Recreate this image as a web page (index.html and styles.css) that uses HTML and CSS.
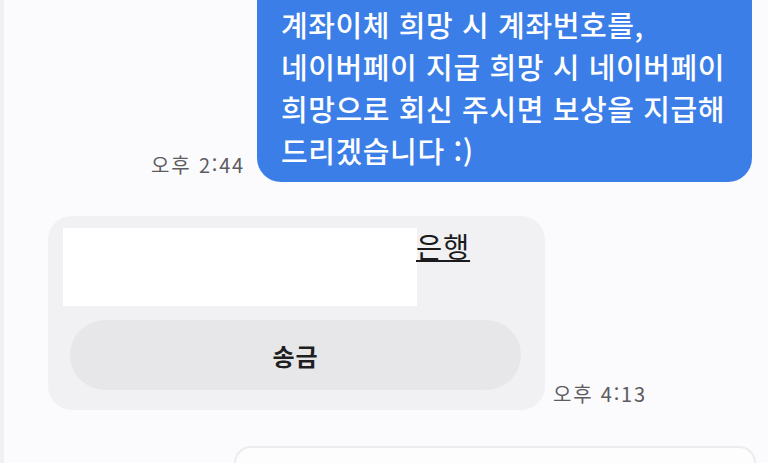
FILE: index.html
```html
<!DOCTYPE html>
<html lang="ko">
<head>
<meta charset="utf-8">
<link rel="stylesheet" href="styles.css">
</head>
<body>
<div class="chat">
  <div class="row row-out">
    <span class="time time-out">오후 2:44</span>
    <div class="bubble">계좌이체 희망 시 계좌번호를,<br>네이버페이 지급 희망 시 네이버페이<br>희망으로 회신 주시면 보상을 지급해<br>드리겠습니다 :)</div>
  </div>
  <div class="row row-in">
    <div class="card">
      <div class="card-top">
        <div class="blank"></div>
        <span class="bank">은행</span>
      </div>
      <div class="send">송금</div>
    </div>
    <span class="time time-in">오후 4:13</span>
  </div>
  <div class="row row-next">
    <div class="next-card"></div>
  </div>
</div>
</body>
</html>
```

FILE: styles.css
```css
* { box-sizing: border-box; }
html, body { margin: 0; padding: 0; }
html { overflow: hidden; }
body {
  width: 768px;
  height: 463px;
  overflow: hidden;
  background: #fbfbfd;
  border-left: 4px solid #eff0f2;
  font-family: "Noto Sans CJK KR", "Noto Sans", sans-serif;
}
.chat {
  display: flex;
  flex-direction: column;
  margin-top: -20px;
}
.row { display: flex; align-items: flex-end; }
.row-out { justify-content: flex-end; padding-right: 16px; gap: 12px; }
.bubble {
  width: 495px;
  background: #3b7ee8;
  color: #fff;
  font-size: 29px;
  font-weight: 500;
  letter-spacing: 0.6px;
  line-height: 42px;
  padding: 23px 4px 11px 24px;
  border-radius: 0 0 24px 24px;
  white-space: nowrap;
}
.time {
  color: #5c5c61;
  font-size: 20px;
  letter-spacing: 1.8px;
  line-height: 24px;
  white-space: nowrap;
}
.time-out { margin-bottom: 5px; }
.row-in { margin-top: 34px; padding-left: 44px; gap: 8px; }
.card {
  width: 497px;
  background: #f1f1f3;
  border-radius: 24px;
  padding: 12px 24px 20px 15px;
}
.card-top { display: flex; align-items: flex-start; }
.blank { width: 354px; height: 78px; background: #fff; }
.bank {
  font-size: 28.5px;
  letter-spacing: 0.8px;
  line-height: 34px;
  color: #1b1b1d;
  text-decoration: underline;
  text-decoration-thickness: 2px;
  text-underline-offset: 2px;
  margin-top: 1px;
  margin-left: -1px;
}
.send {
  margin: 14px 0 0 7px;
  height: 70px;
  border-radius: 35px;
  background: #e7e7e9;
  display: flex;
  align-items: center;
  justify-content: center;
  font-size: 24px;
  letter-spacing: 1px;
  font-weight: 700;
  color: #1f1f22;
}
.time-in { margin-bottom: 4px; }
.row-next { margin-top: 36px; justify-content: flex-end; padding-right: 12px; }
.next-card {
  width: 522px;
  height: 17px;
  background: #fdfdfe;
  border: 2px solid #ececef;
  border-bottom: none;
  border-radius: 22px 22px 0 0;
}
```
